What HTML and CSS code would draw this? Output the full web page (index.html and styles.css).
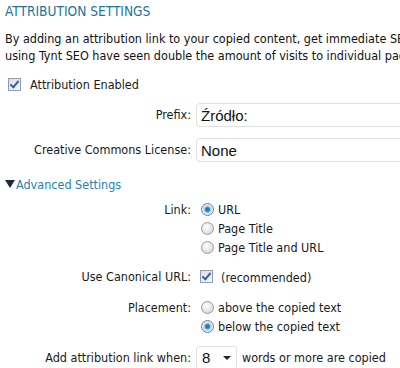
FILE: index.html
```html
<!DOCTYPE html>
<html lang="en">
<head>
    <meta charset="UTF-8">
    <title>Attribution Settings</title>
    <link rel="stylesheet" href="styles.css">
</head>
<body>
    <div class="wrap">
        <h3 class="title">ATTRIBUTION SETTINGS</h3>
        <p class="intro">
            <span>By adding an attribution link to your copied content, get immediate SEO benefits. Publishers</span>
            <span>using Tynt SEO have seen double the amount of visits to individual pages from search engines.</span>
        </p>

        <label class="enable"><input type="checkbox" class="check" checked> Attribution Enabled</label>

        <div class="form-grid basic">
            <div class="lbl">Prefix:</div>
            <div class="field"><input type="text" class="text-in" value="Źródło:"></div>

            <div class="lbl">Creative Commons License:</div>
            <div class="field"><input type="text" class="text-in" value="None"></div>
        </div>

        <a class="toggle" href="#"><span class="arrow"></span>Advanced Settings</a>

        <div class="form-grid advanced">
            <div class="lbl">Link:</div>
            <div class="field options">
                <label><input type="radio" name="link" class="radio" checked> URL</label>
                <label><input type="radio" name="link" class="radio"> Page Title</label>
                <label><input type="radio" name="link" class="radio"> Page Title and URL</label>
            </div>

            <div class="lbl">Use Canonical URL:</div>
            <div class="field canon">
                <label><input type="checkbox" class="check" checked> <span class="rec">(recommended)</span></label>
            </div>

            <div class="lbl">Placement:</div>
            <div class="field options">
                <label><input type="radio" name="place" class="radio"> above the copied text</label>
                <label><input type="radio" name="place" class="radio" checked> below the copied text</label>
            </div>

            <div class="lbl when">Add attribution link when:</div>
            <div class="field words">
                <div class="select"><span>8</span><span class="caret"></span></div>
                <span>words or more are copied</span>
            </div>
        </div>
    </div>
</body>
</html>
```

FILE: styles.css
```css
* {
    box-sizing: border-box;
}

body {
    margin: 0;
    background: #fff;
    overflow: hidden;
    font-family: "DejaVu Sans Condensed", "DejaVu Sans", sans-serif;
    font-size: 12.5px;
    color: #1a1a1a;
}

.wrap {
    padding: 0 0 0 5px;
    width: 400px;
}

.title {
    margin: 0;
    padding-top: 3px;
    height: 24px;
    font-size: 13.6px;
    font-weight: normal;
    color: #21759b;
}

.intro {
    margin: 6px 0 0 0;
    line-height: 17px;
    color: #111;
}

.intro span {
    display: block;
    white-space: nowrap;
}

.enable {
    display: flex;
    align-items: center;
    gap: 9px;
    margin: 13px 0 0 3px;
    height: 14px;
}

/* checkbox, old winxp look */
.check {
    appearance: none;
    margin: 0;
    width: 13px;
    height: 13px;
    border: 1px solid #8f9cae;
    background: linear-gradient(135deg, #dcdfe6, #f4f5f7);
    position: relative;
}

.check:checked::after {
    content: "";
    position: absolute;
    left: 3px;
    top: 0px;
    width: 3px;
    height: 7px;
    border: solid #3c5fa8;
    border-width: 0 2px 2px 0;
    transform: rotate(40deg);
}

.radio {
    appearance: none;
    margin: 0;
    width: 13px;
    height: 13px;
    border-radius: 50%;
    border: 1px solid #9a9a9a;
    background: radial-gradient(circle at 40% 35%, #fff, #d8d8d8 80%);
    position: relative;
}

.radio:checked {
    background: radial-gradient(circle at 50% 50%, #1d6fb0 0, #2a86c8 2px, #a7c9e4 3px, #e6eef5 5px);
    border-color: #6b7f96;
}

.form-grid {
    display: grid;
    grid-template-columns: 186px 1fr;
    column-gap: 5px;
}

.lbl {
    text-align: right;
    white-space: nowrap;
}

.basic {
    margin-top: 12px;
    row-gap: 11px;
}

.basic .lbl {
    line-height: 24px;
}

.text-in {
    display: block;
    width: 300px;
    height: 24px;
    border: 1px solid #dfdfdf;
    border-radius: 4px;
    padding: 0 4px;
    font-family: "Liberation Sans", Arial, sans-serif;
    font-size: 15px;
    color: #111;
    background: #fff;
}

.toggle {
    display: flex;
    align-items: center;
    margin-top: 14px;
    color: #2583ad;
    text-decoration: none;
    height: 16px;
}

.arrow {
    width: 0;
    height: 0;
    border-left: 5px solid transparent;
    border-right: 5px solid transparent;
    border-top: 8px solid #1e2a3a;
    margin-right: 1px;
}

.advanced {
    margin-top: 8px;
    row-gap: 10px;
}

.advanced .lbl {
    line-height: 19px;
}

.field {
    white-space: nowrap;
}

.options label,
.canon label {
    display: flex;
    align-items: center;
    gap: 4px;
    height: 19px;
}

.options label .radio {
    margin-left: 5px;
}

.canon {
    margin-bottom: 2px;
}

.canon label {
    gap: 8px;
}

.canon .check {
    margin-left: 4px;
}

.rec {
    margin-top: 2px;
}

.words {
    display: flex;
    align-items: center;
    gap: 5px;
}

.advanced .when {
    line-height: 23px;
}

.select {
    display: flex;
    align-items: center;
    justify-content: space-between;
    width: 41px;
    height: 23px;
    border: 1px solid #dfdfdf;
    border-radius: 3px;
    padding: 0 5px 0 5px;
    font-family: "Liberation Sans", Arial, sans-serif;
    font-size: 15px;
    color: #111;
}

.caret {
    width: 0;
    height: 0;
    border-left: 4px solid transparent;
    border-right: 4px solid transparent;
    border-top: 4px solid #222;
}
```
